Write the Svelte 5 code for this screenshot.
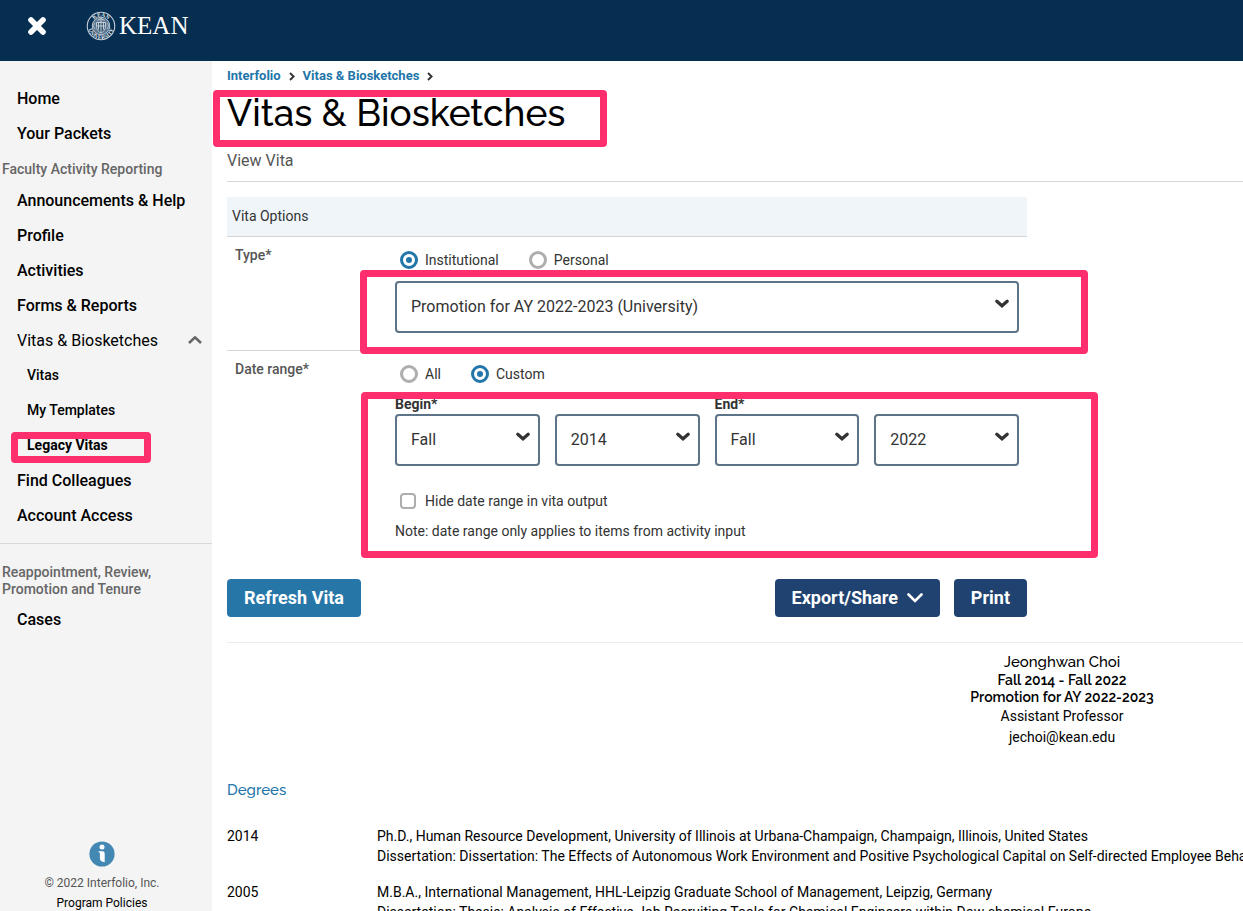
<script>
  let type = $state('institutional');
  let range = $state('custom');
  let hideRange = $state(false);
  let dates = $state(['Fall', '2014', 'Fall', '2022']);
  let template = $state('Promotion for AY 2022-2023 (University)');

  const mainLinks = ['Announcements & Help', 'Profile', 'Activities', 'Forms & Reports'];
  const terms = ['Fall', 'Spring', 'Summer'];
  const years = ['2014', '2018', '2022'];
  const degrees = [
    {
      year: '2014',
      title: 'Ph.D., Human Resource Development, University of Illinois at Urbana-Champaign, Champaign, Illinois, United States',
      note: 'Dissertation: Dissertation: The Effects of Autonomous Work Environment and Positive Psychological Capital on Self-directed Employee Behavior'
    },
    {
      year: '2005',
      title: 'M.B.A., International Management, HHL-Leipzig Graduate School of Management, Leipzig, Germany',
      note: 'Dissertation: Thesis: Analysis of Effective Job Recruiting Tools for Chemical Engineers within Dow chemical Europe'
    }
  ];
</script>

{#snippet selectChevron()}
  <svg class="caret" width="14" height="10" viewBox="0 0 14 10" aria-hidden="true">
    <path d="M1.8 2.2 L7 6.8 L12.2 2.2" fill="none" stroke="#333" stroke-width="3.2" stroke-linecap="round" />
  </svg>
{/snippet}

{#snippet crumbArrow()}
  <svg width="6" height="9" viewBox="0 0 6 9" aria-hidden="true">
    <path d="M1 1 L4.6 4.5 L1 8" fill="none" stroke="#333" stroke-width="1.9" />
  </svg>
{/snippet}

{#snippet dateSelect(i, label, options)}
  <span class="select">
    <select id="date-{i}" aria-label={label} bind:value={dates[i]}>
      {#each options as o}<option>{o}</option>{/each}
    </select>
    {@render selectChevron()}
  </span>
{/snippet}

<div class="app">
  <header>
    <button class="close" aria-label="Close menu">
      <svg width="20" height="20" viewBox="0 0 20 20" aria-hidden="true">
        <path d="M4 4 L16 16 M16 4 L4 16" stroke="#fff" stroke-width="5.6" stroke-linecap="round" />
      </svg>
    </button>
    <a class="logo" href="#home" aria-label="Kean University">
      <svg width="30" height="30" viewBox="0 0 60 60" aria-hidden="true">
        <defs>
          <path id="arc-top" d="M11 30 A19 19 0 1 1 49 30" />
          <path id="arc-bottom" d="M4 26 A26.3 26.3 0 1 0 56 26" />
        </defs>
        <g fill="none" stroke="#c3ced9">
          <circle cx="30" cy="30" r="27.5" stroke-width="2.2" />
          <circle cx="30" cy="30" r="17.5" stroke-width="1.8" fill="#5d7890" />
          <path d="M21 23 H39 V31 C39 38 34 42 30 44 C26 42 21 38 21 31 Z" stroke-width="2" fill="#33546f" />
          <path d="M30 15 V42 M22 30 H38 M25 24 V37 M35 24 V37 M23 19 L30 15 L37 19" stroke-width="2" />
          <path d="M14 30 L18 24 M14 30 L18 36 M46 30 L42 24 M46 30 L42 36" stroke-width="1.5" />
        </g>
        <g fill="#e6ebf0" font-family="Liberation Serif, serif" font-weight="700" font-size="11">
          <text text-anchor="middle"><textPath href="#arc-top" startOffset="50%">KEAN</textPath></text>
          <text text-anchor="middle"><textPath href="#arc-bottom" startOffset="50%">UNIVERSITY</textPath></text>
        </g>
      </svg>
      <span>KEAN</span>
    </a>
  </header>

  <div class="body">
    <aside>
      <nav>
        <a href="#home">Home</a>
        <a href="#packets">Your Packets</a>
        <h2>Faculty Activity Reporting</h2>
        {#each mainLinks as l}<a href="#section">{l}</a>{/each}
        <button class="group" aria-expanded="true">
          Vitas &amp; Biosketches
          <svg width="16" height="10" viewBox="0 0 16 10" aria-hidden="true">
            <path d="M2 7 L8 1.4 L14 7" fill="none" stroke="#666" stroke-width="2.6" />
          </svg>
        </button>
        <a class="sub" href="#vitas">Vitas</a>
        <a class="sub" href="#templates">My Templates</a>
        <a class="sub current" href="#legacy">Legacy Vitas<span class="mark"></span></a>
        <a href="#colleagues">Find Colleagues</a>
        <a href="#account">Account Access</a>
        <hr />
        <h2 class="review">Reappointment, Review, Promotion and Tenure</h2>
        <a href="#cases">Cases</a>
      </nav>
      <footer>
        <svg width="26" height="26" viewBox="0 0 26 26" aria-hidden="true">
          <circle cx="13" cy="13" r="12.6" fill="#4288b3" />
          <circle cx="13" cy="6" r="2.5" fill="#fff" />
          <path d="M9.5 10.2 H13.5 Q15.7 10.2 15.7 12.4 V21.3 Q10.9 20.7 10.9 17 V12.4 Q10.9 11.2 9.5 11 Z" fill="#fff" />
        </svg>
        <p>© 2022 Interfolio, Inc.</p>
        <a href="#policies">Program Policies</a>
      </footer>
    </aside>

    <main>
      <div class="crumbs">
        <a href="#interfolio">Interfolio</a>{@render crumbArrow()}
        <a href="#biosketches">Vitas &amp; Biosketches</a>{@render crumbArrow()}
      </div>
      <div class="title"><h1>Vitas &amp; Biosketches</h1><span class="mark"></span></div>
      <p class="subtitle">View Vita</p>

      <form class="options" onsubmit={(e) => e.preventDefault()}>
        <h2>Vita Options</h2>
        <div class="row type">
          <span class="name">Type*</span>
          <div class="field">
            <div class="choices">
              <label><input type="radio" name="type" value="institutional" bind:group={type} />Institutional</label>
              <label><input type="radio" name="type" value="personal" bind:group={type} />Personal</label>
            </div>
            <span class="select">
              <select aria-label="Vita template" bind:value={template}>
                <option>Promotion for AY 2022-2023 (University)</option>
              </select>
              {@render selectChevron()}
            </span>
          </div>
          <span class="mark"></span>
        </div>
        <div class="row range">
          <span class="name">Date range*</span>
          <div class="field">
            <div class="choices">
              <label><input type="radio" name="range" value="all" bind:group={range} />All</label>
              <label><input type="radio" name="range" value="custom" bind:group={range} />Custom</label>
            </div>
            <div class="dates">
              <div class="pair">
                <label for="date-0">Begin*</label>
                {@render dateSelect(0, 'Begin term', terms)}
                {@render dateSelect(1, 'Begin year', years)}
              </div>
              <div class="pair">
                <label for="date-2">End*</label>
                {@render dateSelect(2, 'End term', terms)}
                {@render dateSelect(3, 'End year', years)}
              </div>
            </div>
            <label class="hide"><input type="checkbox" bind:checked={hideRange} />Hide date range in vita output</label>
            <p class="hint">Note: date range only applies to items from activity input</p>
          </div>
          <span class="mark"></span>
        </div>
        <div class="actions">
          <button class="btn refresh">Refresh Vita</button>
          <button class="btn" type="button">Export/Share
            <svg width="16" height="10" viewBox="0 0 16 10" aria-hidden="true">
              <path d="M1.5 1.5 L8 8 L14.5 1.5" fill="none" stroke="#fff" stroke-width="2.6" stroke-linecap="round" />
            </svg>
          </button>
          <button class="btn" type="button">Print</button>
        </div>
      </form>

      <article>
        <div class="person">
          <h3>Jeonghwan Choi</h3>
          <h4>Fall 2014 - Fall 2022</h4>
          <h4>Promotion for AY 2022-2023</h4>
          <p>Assistant Professor</p>
          <p>jechoi@kean.edu</p>
        </div>
        <h2>Degrees</h2>
        <dl>
          {#each degrees as d}
            <dt>{d.year}</dt>
            <dd>{d.title}<br />{d.note}</dd>
          {/each}
        </dl>
      </article>
    </main>
  </div>
</div>

<style>
  :global(body) { background: #fff; }
  .app {
    display: flex;
    flex-direction: column;
    height: 100vh;
    overflow: hidden;
    font-family: Roboto, "Liberation Sans", sans-serif;
    font-size: 14px;
    line-height: 20px;
    color: #333;
  }
  .app :global(*) { box-sizing: border-box; }
  h1, h2, h3, h4, p, dl, dd { margin: 0; font-weight: 400; }
  a { color: inherit; text-decoration: none; }
  button { font: inherit; border: 0; cursor: pointer; }
  svg { display: block; flex: none; }

  header {
    display: flex;
    align-items: center;
    flex: none;
    height: 61px;
    padding: 0 27px 10px;
    gap: 39px;
    background: #062e51;
  }
  .close { padding: 0; background: none; }
  .logo { display: flex; align-items: center; gap: 3px; color: #fff; font: 25px/28px "Liberation Serif", serif; }

  .body { display: grid; grid-template-columns: 212px minmax(0, 1fr); flex: 1; min-height: 0; }
  aside {
    display: flex;
    flex-direction: column;
    justify-content: space-between;
    min-height: 0;
    padding-top: 20px;
    background: #f4f4f4;
    color: #000;
  }
  nav { display: flex; flex-direction: column; }
  nav a { position: relative; padding-left: 17px; font-size: 16px; line-height: 35px; font-weight: 500; }
  nav .sub { padding-left: 27px; font-size: 14px; }
  nav .current { font-weight: 700; }
  nav h2 { padding: 8px 2px 4px; font-weight: 500; font-size: 14px; line-height: 20px; color: #666; }
  nav .review { padding: 20px 40px 4px 2px; line-height: 17px; }
  .group {
    display: flex;
    align-items: center;
    justify-content: space-between;
    padding: 0 9px 0 17px;
    background: none;
    font-size: 16px;
    line-height: 35px;
    color: #000;
  }
  hr { width: 100%; margin: 10px 0 0; border: 0; border-top: 1px solid #d9d9d9; }
  footer { display: flex; flex-direction: column; align-items: center; margin-bottom: -3px; padding-right: 8px; font-size: 12px; }
  footer p { margin-top: 6px; color: #555; }
  footer a { line-height: 21px; }

  .mark { position: absolute; z-index: 1; border: 7px solid #ff2e6c; border-radius: 4px; pointer-events: none; }
  .current .mark { left: 11px; top: 4px; width: 140px; height: 31px; }
  .title .mark { left: -14px; top: 4px; width: 394px; height: 57px; }
  .type .mark { left: 133px; right: -61px; top: 33px; bottom: -3px; }
  .range .mark { left: 134px; right: -71px; top: 41px; bottom: 4px; }

  main { padding-left: 15px; overflow: hidden; }
  .crumbs { display: flex; align-items: center; gap: 8px; padding-top: 5px; font-size: 13px; color: #2276a9; font-weight: 700; }
  .title { position: relative; padding-top: 7px; }
  h1 { height: 50px; font: 500 37px/40px Raleway, Lato, sans-serif; color: #000; }
  .subtitle { padding: 8px 0 10px; border-bottom: 1px solid #d6d6d6; font-size: 16px; color: #555; }

  .options { max-width: 800px; margin-top: 15px; }
  .options h2 { padding: 9px 5px 10px; border-bottom: 1px solid #d6d6d6; background: #eff5f8; font-size: 14px; }
  .row { position: relative; display: grid; grid-template-columns: 160px minmax(0, 1fr); padding: 8px 8px 0; }
  .type { padding-bottom: 18px; }
  .type::after {
    content: "";
    position: absolute;
    bottom: 0;
    left: 0;
    width: 168px;
    border-bottom: 1px solid #d6d6d6;
  }
  .name { font-weight: 500; color: #555; }
  .choices { display: flex; gap: 30px; padding: 5px 5px 0; }
  .choices label, .hide { display: flex; align-items: center; gap: 7px; }
  .choices + .select { margin-top: 11px; }
  input { appearance: none; flex: none; margin: 0; border-style: solid; border-color: #aeaeae; background: #fff; }
  input[type="radio"] { display: grid; place-items: center; width: 18px; height: 18px; border-width: 3px; border-radius: 50%; }
  input[type="radio"]:checked { border-color: #2276a9; }
  input[type="radio"]:checked::before { content: ""; width: 6px; height: 6px; border-radius: 50%; background: #2276a9; }
  input[type="checkbox"] { width: 16px; height: 16px; border-width: 2px; border-radius: 4px; }
  input[type="checkbox"]:checked { background: #2276a9; }
  .select { position: relative; display: block; }
  select {
    display: block;
    appearance: none;
    width: 100%;
    height: 52px;
    padding: 0 32px 0 14px;
    border: 2px solid #5d7488;
    border-radius: 4px;
    background: #fff;
    font: inherit;
    font-size: 16px;
    color: #333;
  }
  .caret { position: absolute; right: 10px; top: 18px; pointer-events: none; }
  .dates, .pair { display: grid; grid-template-columns: 1fr 1fr; column-gap: 15px; }
  .dates { padding-top: 10px; }
  .pair label { grid-column: 1 / 3; font-weight: 700; }
  .hide { padding: 25px 5px 0; gap: 9px; }
  .hint { padding: 10px 0 20px; }
  .range .field { padding-bottom: 1px; }

  .actions { display: flex; gap: 14px; padding-top: 17px; }
  .btn {
    display: flex;
    align-items: center;
    gap: 9px;
    height: 38px;
    padding: 0 17px;
    border-radius: 4px;
    background: #1f4270;
    color: #fff;
    font-size: 18px;
    font-weight: 700;
  }
  .refresh { margin-right: auto; background: #2676a8; }

  /* The vita document keeps a wide page and is clipped by the pane. */
  article { min-width: 1670px; margin-top: 25px; border-top: 1px solid #ebebeb; color: #000; }
  .person { padding-top: 9px; text-align: center; }
  .person h3 { font: 500 15px/20px Raleway, Lato, sans-serif; }
  .person h4 { font: 600 14px/17px Raleway, Lato, sans-serif; }
  .person p { line-height: 21px; }
  article h2 { padding-top: 32px; font: 500 15px/20px Raleway, Lato, sans-serif; color: #2276a9; }
  dl { display: grid; grid-template-columns: 150px minmax(0, 1fr); row-gap: 16px; padding-top: 26px; }
</style>
